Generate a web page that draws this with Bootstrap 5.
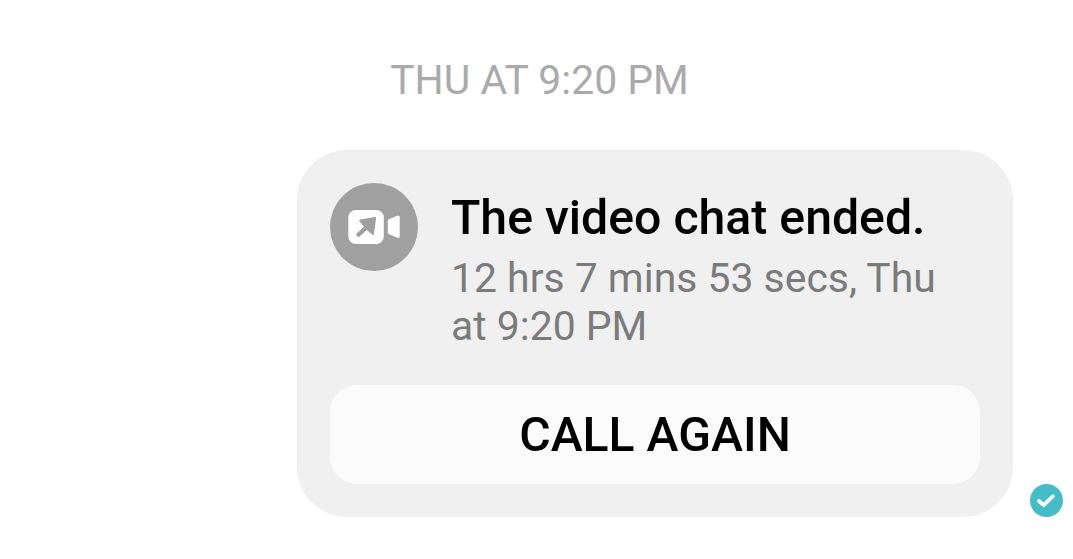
<!DOCTYPE html>
<html lang="en">
<head>
<meta charset="utf-8">
<meta name="viewport" content="width=device-width, initial-scale=1">
<title>Chat</title>
<link href="https://cdn.jsdelivr.net/npm/bootstrap@5.3.0/dist/css/bootstrap.min.css" rel="stylesheet">
<style>
body{font-family:Roboto,sans-serif;background:#fff;height:559px;overflow:hidden}
.stamp{padding:55px 0 0 6px;font-size:40.9px;line-height:50px;color:#aaa;height:150px}
.bubble{width:716px;height:367px;border:0;border-radius:50px;background:#f0f0f0;padding:33px}
.call-icon{width:88px;height:88px;flex:none}
.call-text{margin-left:33px;height:202px}
.call-title{font-size:48.2px;line-height:56px;font-weight:500;color:#000;margin:0;padding-top:7px;white-space:nowrap}
.call-meta{font-size:40.9px;line-height:48px;color:#7b7b7b;margin:8px 0 0;white-space:nowrap}
.call-btn{height:99px;border:0;border-radius:27px;background:#fbfbfb;color:#000;font-size:48.2px;line-height:56px;font-weight:500;padding:1px 0 0}
.seen{width:33px;height:33px;margin:0 10px 0 17px;flex:none}
</style>
</head>
<body>
<main>
<div class="stamp text-center">THU AT 9:20 PM</div>
<div class="d-flex justify-content-end align-items-end">
<div class="card bubble">
<div class="d-flex align-items-start">
<svg class="call-icon" viewBox="0 0 88 88" aria-hidden="true">
<circle cx="44" cy="44" r="44" fill="#a0a0a0"/>
<rect x="18.3" y="27" width="35.5" height="34" rx="7.5" fill="#fff"/>
<path d="M58.7 36.3L67.5 32.8Q69.7 32.2 69.7 34.3V53.4Q69.7 55.5 67.5 54.8L58.7 51Q57.8 50.5 57.8 49.3V38Q57.8 36.8 58.7 36.3Z" fill="#fff"/>
<path d="M30.3 37.5L45 35L42.8 50.8L38.5 47L34 42Z" fill="#a0a0a0" stroke="#a0a0a0" stroke-width="2.2" stroke-linejoin="round"/>
<path d="M28.5 51.6L38 43" stroke="#a0a0a0" stroke-width="4.3" stroke-linecap="round"/>
</svg>
<div class="call-text"><h1 class="call-title">The video chat ended.</h1><p class="call-meta">12 hrs 7 mins 53 secs, Thu<br>at 9:20 PM</p></div>
</div>
<button class="btn call-btn w-100">CALL AGAIN</button>
</div>
<svg class="seen" viewBox="0 0 33 33" aria-hidden="true"><circle cx="16.5" cy="16.5" r="16.5" fill="#45bdc7"/><path d="M9 17L13.7 21.2L23 12.2" fill="none" stroke="#fff" stroke-width="3.7" stroke-linecap="round" stroke-linejoin="round"/></svg>
</div>
</main>
<script src="https://cdn.jsdelivr.net/npm/bootstrap@5.3.0/dist/js/bootstrap.bundle.min.js"></script>
</body>
</html>
